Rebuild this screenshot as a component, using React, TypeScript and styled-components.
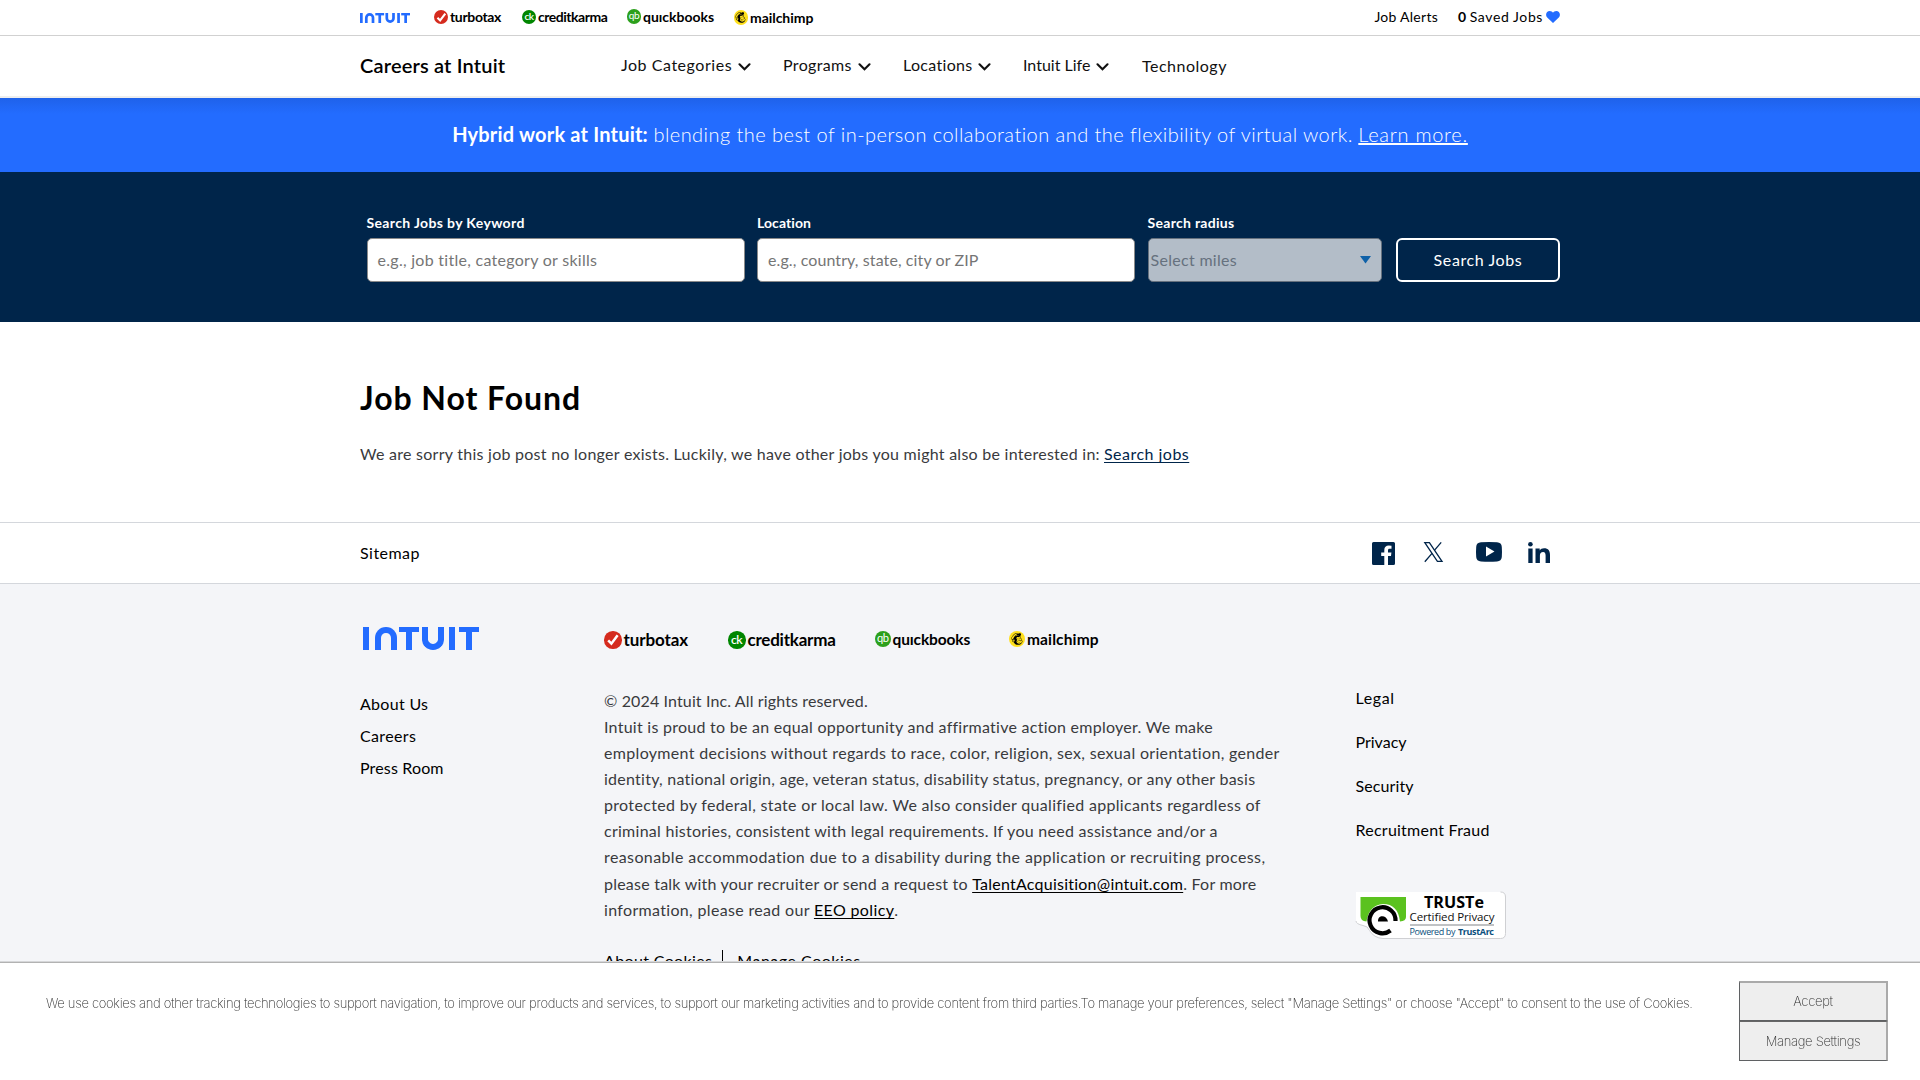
import React from "react";
import styled, { createGlobalStyle } from "styled-components";
import { SiMailchimp } from "react-icons/si";

const GlobalStyle = createGlobalStyle`
  *, *::before, *::after { box-sizing: border-box; }
  body { margin: 0; background: #fff; }
`;

const Page = styled.div`
  height: 1080px;
  overflow: hidden;
  display: flex;
  flex-direction: column;
  background: #fff;
  color: #000;
  font: 400 16px/24px Lato, "Open Sans", sans-serif;
`;

const Container = styled.div`
  width: 1200px;
  margin: 0 auto;
  display: flex;
`;

const Track = styled.span<{ $ls: number }>`
  letter-spacing: ${(p) => p.$ls}px;
  white-space: nowrap;
`;

const TextLink = styled.a<{ $ls?: number; $color?: string }>`
  color: ${(p) => p.$color ?? "#000"};
  letter-spacing: ${(p) => p.$ls ?? 0}px;
  white-space: nowrap;
  text-decoration: none;
`;

const UnderlinedLink = styled(TextLink)`
  text-decoration: underline;
  text-decoration-skip-ink: none;
  text-underline-offset: 2px;
  text-decoration-thickness: 1px;
`;

/* ---------- Intuit wordmark ---------- */

const Wordmark = styled.div<{ $unit: number }>`
  font-size: ${(p) => p.$unit}px;
  display: flex;
  height: 22.5em;
  line-height: 0;
  color: #236cff;
`;
const Bar = styled.i<{ $gap?: number }>`
  width: 6em;
  margin-left: ${(p) => p.$gap ?? 0}em;
  background: currentColor;
`;
const Arch = styled.i`
  width: 21.6em;
  margin-left: 6em;
  border: 6em solid currentColor;
  border-bottom: 0;
  border-radius: 10.8em 10.8em 0 0;
`;
const Cup = styled.i`
  width: 21.6em;
  margin-left: 3.2em;
  border: 6em solid currentColor;
  border-top: 0;
  border-radius: 0 0 10.8em 10.8em;
`;
const Tee = styled.i<{ $gap: number }>`
  width: 20em;
  margin-left: ${(p) => p.$gap}em;
  border-top: 5.2em solid currentColor;
  display: flex;
  justify-content: center;
  &::after {
    content: "";
    width: 6em;
    background: currentColor;
  }
`;

function IntuitLogo({ unit }: { unit: number }) {
  return (
    <Wordmark $unit={unit} role="img" aria-label="Intuit">
      <Bar />
      <Arch />
      <Tee $gap={2.4} />
      <Cup />
      <Bar $gap={5.6} />
      <Tee $gap={3.6} />
    </Wordmark>
  );
}

/* Header-size wordmark: its strokes are a little heavier so that they stay solid. */
const SmallWordmark = styled.svg`
  display: block;
  width: 50px;
  height: 10px;
`;

function SmallIntuitLogo() {
  const stroke = { fill: "none", stroke: "#236cff", strokeWidth: 2.7 };
  return (
    <SmallWordmark viewBox="0 0 50 10" role="img" aria-label="Intuit">
      <g fill="#236cff">
        <rect x="0" y="0" width="2.7" height="10" />
        <rect x="15.300" y="0" width="8.800" height="2.400" />
        <rect x="18.400" y="0" width="2.700" height="10" />
        <rect x="37.200" y="0" width="2.700" height="10" />
        <rect x="41.200" y="0" width="8.800" height="2.400" />
        <rect x="44.300" y="0" width="2.700" height="10" />
      </g>
      <path d="M6.300 10V4.700A3.350 3.350 0 0 1 13 4.700V10" {...stroke} />
      <path d="M26.800 0V5.300A3.350 3.350 0 0 0 33.500 5.300V0" {...stroke} />
    </SmallWordmark>
  );
}

/* ---------- product brands ---------- */

type BrandName = "turbotax" | "creditkarma" | "quickbooks" | "mailchimp";

const Brand = styled.a<{ $gap: number }>`
  display: flex;
  align-items: flex-start;
  margin-left: ${(p) => p.$gap}px;
  color: #000;
  text-decoration: none;
`;
const Disc = styled.span<{ $size: number; $top: number; $bg: string }>`
  width: ${(p) => p.$size}px;
  height: ${(p) => p.$size}px;
  margin-top: ${(p) => p.$top}px;
  border-radius: 50%;
  background: ${(p) => p.$bg};
  color: #000;
  display: flex;
  align-items: center;
  justify-content: center;
  flex: none;
`;
const BrandWord = styled.span<{ $size: number; $ls: number; $w: number; $top: number }>`
  width: ${(p) => p.$w}px;
  margin: ${(p) => p.$top}px 0 0 2px;
  font-size: ${(p) => p.$size}px;
  line-height: 18px;
  font-weight: 700;
  letter-spacing: ${(p) => p.$ls}px;
  white-space: nowrap;
`;

const discColor: Record<BrandName, string> = {
  turbotax: "#d52b1e",
  creditkarma: "#008600",
  quickbooks: "#2ca01c",
  mailchimp: "#ffe01b",
};

function BrandGlyph({ name, size }: { name: BrandName; size: number }) {
  if (name === "turbotax")
    return (
      <svg width={size} height={size} viewBox="0 0 18 18">
        <path d="M4.300 9.600 7.600 13 14 4.400" fill="none" stroke="#fff" strokeWidth="2.600" />
      </svg>
    );
  if (name === "mailchimp") return <SiMailchimp size={size * 0.74} />;
  return (
    <svg width={size} height={size} viewBox="0 0 18 18">
      <text
        x="8.700"
        y={name === "creditkarma" ? 13 : 12.2}
        textAnchor="middle"
        fontFamily="Lato, sans-serif"
        fontWeight={name === "creditkarma" ? 600 : 400}
        fontSize="12.5"
        letterSpacing="-0.6"
        fill="#fff"
      >
        {name === "creditkarma" ? "ck" : "qb"}
      </text>
    </svg>
  );
}

interface BrandSpec {
  name: BrandName;
  gap: number;
  disc: number;
  discTop: number;
  word: number;
  wordTop: number;
  ls: number;
  w: number;
}

function BrandItem(b: BrandSpec) {
  return (
    <Brand href="#" $gap={b.gap}>
      <Disc $size={b.disc} $top={b.discTop} $bg={discColor[b.name]}>
        <BrandGlyph name={b.name} size={b.disc} />
      </Disc>
      <BrandWord $size={b.word} $ls={b.ls} $w={b.w} $top={b.wordTop}>
        {b.name === "quickbooks" ? "quıckbooks" : b.name}
      </BrandWord>
    </Brand>
  );
}

const topBrands: BrandSpec[] = [
  { name: "turbotax", gap: 23.5, disc: 14.5, discTop: 9.5, word: 14, wordTop: 8, ls: -0.34, w: 51 },
  { name: "creditkarma", gap: 20.5, disc: 14.5, discTop: 9.5, word: 14, wordTop: 8, ls: -0.48, w: 70 },
  { name: "quickbooks", gap: 18.5, disc: 14.5, discTop: 9, word: 14, wordTop: 8, ls: -0.03, w: 71 },
  { name: "mailchimp", gap: 19.5, disc: 14.5, discTop: 10, word: 14, wordTop: 8.5, ls: -0.05, w: 63 },
];

const footerBrands: BrandSpec[] = [
  { name: "turbotax", gap: 0, disc: 17.5, discTop: 0, word: 17, wordTop: 0, ls: -0.1, w: 64.5 },
  { name: "creditkarma", gap: 40, disc: 17.5, discTop: 0, word: 17, wordTop: 0, ls: -0.23, w: 89.5 },
  { name: "quickbooks", gap: 37.5, disc: 16, discTop: 0, word: 15.5, wordTop: -1, ls: -0.13, w: 78.5 },
  { name: "mailchimp", gap: 38, disc: 16, discTop: 0, word: 15.5, wordTop: -1, ls: 0.12, w: 72 },
];

/* ---------- header ---------- */

const UtilityBar = styled.div`
  height: 36px;
  flex: none;
  border-bottom: 1px solid #d1d1d1;
`;
const TopLogo = styled.div`
  padding-top: 13px;
  width: 50px;
`;
const UtilityLinks = styled.div`
  margin-left: auto;
  display: flex;
  align-items: center;
  height: 34px;
  font-size: 14px;
`;
const SavedLink = styled.a`
  display: flex;
  align-items: center;
  gap: 3px;
  margin-left: 20px;
  color: #000;
`;

const NavBar = styled.div`
  height: 62px;
  flex: none;
  border-bottom: 2px solid #eee;
`;
const SiteTitle = styled.div`
  width: 261px;
  padding-top: 17px;
  font-size: 20px;
  font-weight: 600;
  letter-spacing: 0.17px;
`;
const NavItem = styled.a<{ $top?: number; $shift?: number }>`
  height: 24px;
  margin: ${(p) => p.$top ?? 17}px 32px 0 ${(p) => p.$shift ?? 0}px;
  display: flex;
  color: #111;
`;
const NavLabel = styled.span<{ $w: number; $ls: number }>`
  width: ${(p) => p.$w}px;
  margin-right: 6px;
  letter-spacing: ${(p) => p.$ls}px;
  white-space: nowrap;
`;
const Chevron = styled.svg`
  width: 13px;
  height: 8px;
  margin-top: 10px;
`;

const nav = [
  { label: "Job Categories", w: 111, ls: 0.54 },
  { label: "Programs", w: 69, ls: 0.35 },
  { label: "Locations", w: 69, ls: 0.32 },
  { label: "Intuit Life", w: 67, ls: 0 },
];

/* ---------- banner and search ---------- */

const Banner = styled.div`
  height: 74px;
  flex: none;
  background: linear-gradient(#1f62ea, #236cff 16px);
  color: #fff;
  font-size: 20px;
  font-weight: 300;
  line-height: 73px;
  text-align: center;
  white-space: nowrap;
`;
const BannerLead = styled.strong`
  font-weight: 700;
  letter-spacing: 0.2px;
`;
const BannerLink = styled(UnderlinedLink)`
  text-decoration-thickness: 2px;
  text-underline-offset: 1px;
`;

const SearchBand = styled.form`
  height: 150px;
  flex: none;
  margin: 0;
  padding-top: 40px;
  background: #00254a;
`;
const SearchRow = styled(Container)`
  padding-left: 6.5px;
  align-items: flex-end;
`;
const Field = styled.label<{ $w: number }>`
  width: ${(p) => p.$w}px;
  margin-right: 12.5px;
  display: flex;
  flex-direction: column;
  color: #fff;
  font-size: 14px;
  font-weight: 700;
  line-height: 22px;
`;
const FieldBox = styled.span<{ $disabled?: boolean }>`
  height: 44px;
  margin-top: 4px;
  padding: ${(p) => (p.$disabled ? "0 10px 0 2px" : "0 10px")};
  display: flex;
  align-items: center;
  justify-content: space-between;
  border: 1px solid ${(p) => (p.$disabled ? "#66717e" : "#8a8a8a")};
  border-radius: 5px;
  background: ${(p) => (p.$disabled ? "#b3bdc8" : "#fff")};
  color: ${(p) => (p.$disabled ? "#66717e" : "#757575")};
  font-size: 16px;
  font-weight: 400;
`;
const SearchButton = styled.button`
  width: 164px;
  height: 44px;
  margin-left: auto;
  padding: 0;
  border: 2px solid #fff;
  border-radius: 6px;
  background: transparent;
  color: #fff;
  font: 400 16px/24px Lato, sans-serif;
  letter-spacing: 0.6px;
`;

/* ---------- main ---------- */

const Main = styled.main`
  width: 1200px;
  height: 200px;
  flex: none;
  margin: 0 auto;
  padding-top: 56px;
`;
const Heading = styled.h1`
  margin: 0;
  font-size: 32px;
  line-height: 40px;
  font-weight: 700;
  letter-spacing: 0.95px;
`;
const Message = styled.p`
  margin: 20px 0 0;
  line-height: 32px;
  color: #393a3d;
  white-space: nowrap;
`;

/* ---------- footer ---------- */

const SitemapBar = styled.div`
  height: 62px;
  flex: none;
  border: solid #d4d7dc;
  border-width: 1px 0;
`;
const SitemapLink = styled(TextLink)`
  padding-top: 18px;
`;
const Social = styled.div`
  margin-left: auto;
  padding: 19px 10px 0 0;
  display: flex;
`;
const SocialIcon = styled.svg<{ $gap: number }>`
  margin-left: ${(p) => p.$gap}px;
  overflow: visible;
  fill: #00254a;
`;

const Footer = styled.footer`
  flex: 1;
  background: #f4f5f8;
`;
const FooterLeft = styled.div`
  width: 244px;
  padding: 43px 0 0 3px;
`;
const LinkList = styled.div`
  margin: 38px 0 0 -3px;
  display: flex;
  flex-direction: column;
  line-height: 32px;
`;
const FooterMain = styled.div`
  width: 751.5px;
  padding-top: 47px;
`;
const BrandRow = styled.div`
  display: flex;
  height: 18px;
`;
const Legal = styled.p`
  margin: 39px 0 0;
  line-height: 26.08px;
  color: #393a3d;
  white-space: nowrap;
`;
const LegalLine = styled.span<{ $ls: number }>`
  display: block;
  letter-spacing: ${(p) => p.$ls}px;
`;
const CookieLinks = styled.div`
  margin-top: 25px;
  display: flex;
  align-items: flex-start;
  line-height: 26px;
`;
const Divider = styled.i`
  width: 1px;
  height: 20px;
  margin: 2px 14px 0 10px;
  background: #000;
`;
const FooterRight = styled.div`
  padding-top: 92px;
  display: flex;
  flex-direction: column;
  line-height: 44px;
`;
const Badge = styled.svg`
  margin-top: 40px;
  width: 150px;
  height: 47px;
  overflow: visible;
`;

const legalLines: [string, number][] = [
  ["© 2024 Intuit Inc. All rights reserved.", 0.13],
  ["Intuit is proud to be an equal opportunity and affirmative action employer. We make", 0.26],
  ["employment decisions without regards to race, color, religion, sex, sexual orientation, gender", 0.325],
  ["identity, national origin, age, veteran status, disability status, pregnancy, or any other basis", 0.257],
  ["protected by federal, state or local law. We also consider qualified applicants regardless of", 0.326],
  ["criminal histories, consistent with legal requirements. If you need assistance and/or a", 0.268],
  ["reasonable accommodation due to a disability during the application or recruiting process,", 0.388],
];

function TrustBadge() {
  return (
    <Badge viewBox="0 0 150 47">
      <path
        d="M0 0H144.500Q149.500 0 149.500 5V41.500Q149.500 46.500 144.500 46.500H27Q18 46 13.500 38.500 12 34 7 33.500 0 32 0 29Z"
        fill="#fff"
      />
      <path
        d="M144.500 0Q149.500 0 149.500 5V41.500Q149.500 46.500 144.500 46.500H27Q18 46 13.500 38.500 12 34 7 33.500 0 32 0 29"
        fill="none"
        stroke="#cfd0d3"
        strokeWidth="1"
      />
      <path d="M4.500 5H50V25Q50 29 44 29.500 42 12 27 12 13 13 10.500 29.500 4.500 29 4.500 24Z" fill="#5bc21f" />
      <path d="M39.500 29A13 13 0 1 0 34.500 38.500" fill="none" stroke="#000" strokeWidth="4.200" />
      <path d="M22 29.500C21.500 22.500 30.500 22.500 32 29.500Z" fill="#000" />
      <g fontFamily="Open Sans, sans-serif">
        <text x="68" y="16" fontSize="15.500" fontWeight="700" textLength="60" lengthAdjust="spacingAndGlyphs">
          TRUSTe
        </text>
        <text x="53.500" y="28.500" fontSize="11.500" textLength="85" fill="#111">
          Certified Privacy
        </text>
        <rect x="54" y="32" width="84" height="2" fill="#c0c2c4" />
        <text x="53.500" y="42.500" fontSize="9" textLength="46" fill="#0b4f7d">
          Powered by
        </text>
        <text x="102" y="42.500" fontSize="9" fontWeight="700" textLength="36" fill="#0b4f7d">
          TrustArc
        </text>
      </g>
    </Badge>
  );
}

/* ---------- cookie consent ---------- */

const ConsentBar = styled.div`
  position: fixed;
  left: 0;
  right: 0;
  bottom: 0;
  height: 118px;
  padding: 18px 32px 0 46px;
  display: flex;
  justify-content: space-between;
  background: #fff;
  border-top: 1px solid #b2b2b2;
  box-shadow: 0 -1px 0 #d6d7d9;
  font: 200 13px/20px Inter, "Liberation Sans", sans-serif;
  color: #333;
`;
const ConsentText = styled.div`
  padding-top: 12px;
  letter-spacing: -0.311px;
  white-space: nowrap;
`;
const ConsentActions = styled.div`
  width: 149px;
  display: flex;
  flex-direction: column;
`;
const ConsentButton = styled.button<{ $last?: boolean }>`
  height: 40px;
  padding: 0 0 ${(p) => (p.$last ? 0 : 1)}px;
  border-style: solid;
  border-color: ${(p) => (p.$last ? "#666" : "#aaa")} #aaa #5f6163 #5f6163;
  border-width: ${(p) => (p.$last ? "1px 2px 1px 1px" : "2px 2px 1px 1px")};
  background: #eee;
  color: #333;
  font: inherit;
  letter-spacing: -0.3px;
`;

export default function App() {
  return (
    <Page>
      <GlobalStyle />
      <UtilityBar>
        <Container>
          <TopLogo>
            <SmallIntuitLogo />
          </TopLogo>
          {topBrands.map((b) => (
            <BrandItem key={b.name} {...b} />
          ))}
          <UtilityLinks>
            <TextLink href="#" $ls={0.27}>Job Alerts</TextLink>
            <SavedLink>
              <span>
                <b>0</b> <Track $ls={0.6}>Saved Jobs</Track>
              </span>
              <svg width="14" height="12" viewBox="0 0 14 12">
                <path d="M7 12 1.200 6.500C-1.300 3.500.8 0 3.700 0 5.200 0 6.400.8 7 1.800 7.600.8 8.800 0 10.300 0 13.200 0 15.300 3.500 12.800 6.500Z" fill="#236cff" />
              </svg>
            </SavedLink>
          </UtilityLinks>
        </Container>
      </UtilityBar>

      <NavBar>
        <Container>
          <SiteTitle>Careers at Intuit</SiteTitle>
          {nav.map((n) => (
            <NavItem key={n.label}>
              <NavLabel $w={n.w} $ls={n.ls}>{n.label}</NavLabel>
              <Chevron viewBox="0 0 13 8">
                <path d="M1.500 1.300 6.500 6.300 11.500 1.300" fill="none" stroke="#111" strokeWidth="2.100" strokeLinecap="round" />
              </Chevron>
            </NavItem>
          ))}
          <NavItem $top={18} $shift={1}>
            <Track $ls={0.5}>Technology</Track>
          </NavItem>
        </Container>
      </NavBar>

      <Banner>
        <BannerLead>Hybrid work at Intuit:</BannerLead>{" "}
        <Track $ls={0.457}>blending the best of in-person collaboration and the flexibility of virtual work.</Track>{" "}
        <BannerLink href="#" $color="#fff" $ls={0.72}>Learn more.</BannerLink>
      </Banner>

      <SearchBand>
        <SearchRow>
          <Field $w={378}>
            <Track $ls={0.36}>Search Jobs by Keyword</Track>
            <FieldBox><Track $ls={0.28}>e.g., job title, category or skills</Track></FieldBox>
          </Field>
          <Field $w={378}>
            <Track $ls={0.08}>Location</Track>
            <FieldBox><Track $ls={0.1}>e.g., country, state, city or ZIP</Track></FieldBox>
          </Field>
          <Field $w={234}>
            <Track $ls={0.3}>Search radius</Track>
            <FieldBox $disabled>
              <Track $ls={0.3}>Select miles</Track>
              <svg width="11" height="8" viewBox="0 0 11 8"><path d="M0 0H11L5.500 7.500Z" fill="#0f61a8" /></svg>
            </FieldBox>
          </Field>
          <SearchButton type="button">Search Jobs</SearchButton>
        </SearchRow>
      </SearchBand>

      <Main>
        <Heading>Job Not Found</Heading>
        <Message>
          <Track $ls={0.262}>
            We are sorry this job post no longer exists. Luckily, we have other jobs you might also be interested in:
          </Track>{" "}
          <UnderlinedLink href="#" $color="#00254a" $ls={0.48}>Search jobs</UnderlinedLink>
        </Message>
      </Main>

      <SitemapBar>
        <Container>
          <SitemapLink href="#" $ls={0.47}>Sitemap</SitemapLink>
          <Social>
            <SocialIcon $gap={0} width="23" height="23" viewBox="0 0 23 23">
              <path d="M1.500 0H21.500Q23 0 23 1.500V21.500Q23 23 21.500 23H16V14H19L19.400 10.600H16V8.400C16 7.300 16.400 6.800 17.600 6.800H19.500V3.800Q18.500 3.600 16.800 3.600C14 3.600 12.300 5.300 12.300 8V10.600H9.200V14H12.300V23H1.500Q0 23 0 21.500V1.500Q0 0 1.500 0Z" />
            </SocialIcon>
            <SocialIcon $gap={29} width="19" height="20" viewBox="0 0 19 20">
              <path d="M.8.600H5.400L18 19.400H13.400Z" fill="none" stroke="#00254a" strokeWidth="1.300" />
              <path d="M17.200.3 10.600 8.200M8 11.400 .8 19.700" fill="none" stroke="#00254a" strokeWidth="1.300" />
            </SocialIcon>
            <SocialIcon $gap={33} width="26" height="20" viewBox="0 0 26 20">
              <path fillRule="evenodd" d="M5 .2Q13-.3 21 .2Q25.600.5 25.800 5Q26.200 10 25.800 15Q25.500 19.200 21 19.500Q13 20 5 19.500Q.5 19.200.2 15Q-.2 10 .2 5Q.4.5 5 .2ZM10 4.500V14.500L18.500 9.500Z" />
            </SocialIcon>
            <SocialIcon $gap={26} width="22" height="21" viewBox="0 0 22 21">
              <circle cx="2.400" cy="2.200" r="2.300" />
              <rect x=".3" y="6.500" width="4.300" height="14.500" />
              <path d="M7.500 6.500H11.700V8.400C12.500 7 14.200 6.200 16 6.200 20.400 6.200 22 8.800 22 13V21H17.600V13.800C17.600 11.500 17 10.100 15.100 10.100 13 10.100 11.900 11.400 11.900 13.800V21H7.500Z" />
            </SocialIcon>
          </Social>
        </Container>
      </SitemapBar>

      <Footer>
        <Container>
          <FooterLeft>
            <IntuitLogo unit={1} />
            <LinkList>
              <TextLink href="#" $ls={0.3}>About Us</TextLink>
              <TextLink href="#" $ls={0.35}>Careers</TextLink>
              <TextLink href="#" $ls={0.15}>Press Room</TextLink>
            </LinkList>
          </FooterLeft>
          <FooterMain>
            <BrandRow>
              {footerBrands.map((b) => (
                <BrandItem key={b.name} {...b} />
              ))}
            </BrandRow>
            <Legal>
              {legalLines.map(([line, ls]) => (
                <LegalLine key={line} $ls={ls}>{line}</LegalLine>
              ))}
              <LegalLine $ls={0.225}>
                please talk with your recruiter or send a request to{" "}
                <UnderlinedLink href="#" $ls={0.24}>TalentAcquisition@intuit.com</UnderlinedLink>. For more
              </LegalLine>
              <LegalLine $ls={0.33}>
                information, please read our <UnderlinedLink href="#" $ls={0.37}>EEO policy</UnderlinedLink>.
              </LegalLine>
            </Legal>
            <CookieLinks>
              <TextLink href="#" $ls={0.36}>About Cookies</TextLink>
              <Divider />
              <TextLink href="#" $ls={0.52}>Manage Cookies</TextLink>
            </CookieLinks>
          </FooterMain>
          <FooterRight>
            <TextLink href="#" $ls={0.6}>Legal</TextLink>
            <TextLink href="#" $ls={0}>Privacy</TextLink>
            <TextLink href="#" $ls={0.1}>Security</TextLink>
            <TextLink href="#" $ls={0.24}>Recruitment Fraud</TextLink>
            <TrustBadge />
          </FooterRight>
        </Container>
      </Footer>

      <ConsentBar>
        <ConsentText>
          We use cookies and other tracking technologies to support navigation, to improve our products and services, to
          support our marketing activities and to provide content from third parties.To manage your preferences, select
          "Manage Settings" or choose "Accept" to consent to the use of Cookies.
        </ConsentText>
        <ConsentActions>
          <ConsentButton>Accept</ConsentButton>
          <ConsentButton $last>Manage Settings</ConsentButton>
        </ConsentActions>
      </ConsentBar>
    </Page>
  );
}
